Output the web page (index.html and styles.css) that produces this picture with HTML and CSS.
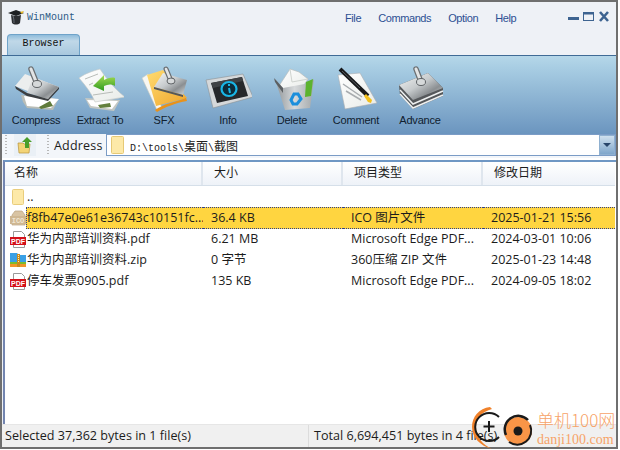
FILE: index.html
```html
<!DOCTYPE html>
<html lang="en">
<head>
<meta charset="utf-8">
<title>WinMount</title>
<link rel="stylesheet" href="styles.css">
</head>
<body>
<div class="win">
  <header class="titlebar">
    <div class="brand">
      <svg class="hat" width="18" height="18" viewBox="0 0 18 18">
        <path d="M1 5 9 2l8 3-8 3z" fill="#1d1f22"/>
        <path d="M4 7c2 1 8 1 10 0l-1 8c-2 2-6 2-8 0z" fill="#2b2d31"/>
        <path d="M6 8c1 3 1 5 1 7" stroke="#6b7078" fill="none"/>
        <path d="M13 4l4-1-2 3z" fill="#e8b923"/>
      </svg>
      <span>WinMount</span>
    </div>
    <nav class="menu">
      <span>File</span><span>Commands</span><span>Option</span><span>Help</span>
    </nav>
    <div class="winbtns">
      <svg width="44" height="12" viewBox="0 0 44 12">
        <rect x="1" y="6" width="11" height="3" fill="#3d6390"/>
        <rect x="16.500" y="1.500" width="10" height="8" fill="none" stroke="#3d6390"/>
        <rect x="16" y="1" width="11" height="2.500" fill="#3d6390"/>
        <path d="M33 1l8 9M41 1l-8 9" stroke="#3d6390" stroke-width="2.600"/>
      </svg>
    </div>
  </header>

  <div class="tabs"><div class="tab">Browser</div></div>

  <div class="toolbar">
    <div class="tool">
      <svg class="ticon" width="48" height="48" viewBox="0 0 48 48">
        <defs>
          <linearGradient id="silver" x1="0" y1="0" x2="1" y2="1">
            <stop offset="0" stop-color="#f6f7f7"/>
            <stop offset=".45" stop-color="#c6cacc"/>
            <stop offset=".7" stop-color="#8b8f92"/>
            <stop offset="1" stop-color="#d8dbdc"/>
          </linearGradient>
          <linearGradient id="bin" x1="0" y1="0" x2="1" y2="0">
            <stop offset="0" stop-color="#8f9497"/>
            <stop offset=".5" stop-color="#d6d9db"/>
            <stop offset="1" stop-color="#a3a8aa"/>
          </linearGradient>
          <linearGradient id="paper" x1="0" y1="0" x2="1" y2="1">
            <stop offset="0" stop-color="#ffffff"/>
            <stop offset="1" stop-color="#e8ebe8"/>
          </linearGradient>
          <linearGradient id="gold" x1="0" y1="0" x2="1" y2="1">
            <stop offset="0" stop-color="#ffdc72"/>
            <stop offset="1" stop-color="#f0a52a"/>
          </linearGradient>
          <linearGradient id="arrow" x1="0" y1="0" x2="0" y2="1">
            <stop offset="0" stop-color="#a5dc52"/>
            <stop offset="1" stop-color="#2e9a1e"/>
          </linearGradient>
        </defs>
        <path d="M9 31 38 33 46 36 41 46 15 44 11 38z" fill="#b9bdb7"/>
        <path d="M12 32 47 35 39 44 15 42z" fill="#fff"/>
        <path d="M27 43 38 37 41 42 29 45z" fill="#5f7a3a"/>
        <path d="M3 22 13 10 47 23 36 35z" fill="#eceeee"/>
        <path d="M21 13 47 23 36 35 15 29z" fill="url(#silver)"/>
        <path d="M3 22 15 29 36 35 47 23 47 25 36 37 15 32 4 25z" fill="#3c3f42"/>
        <path d="M19 5l6 15" stroke="#6b6f72" stroke-width="5.500" stroke-linecap="round"/>
        <path d="M19 5l6 15" stroke="#e2e4e5" stroke-width="3" stroke-linecap="round"/>
        <ellipse cx="25" cy="20" rx="4.500" ry="3.500" fill="#d6d9da" stroke="#5f6366"/>
      </svg>
      <span>Compress</span>
    </div>
    <div class="tool">
      <svg class="ticon" width="48" height="48" viewBox="0 0 48 48">
        <path d="M9 34 44 36 38 47 14 44z" fill="#c4c8c4"/>
        <path d="M11 36 42 37 36 45 15 42z" fill="#fff"/>
        <path d="M22 41 34 39 35 43 24 44z" fill="#64803e"/>
        <path d="M3 14C10 9 17 7 24 5c4 6 13 19 25 28-10 2-20 3-30 5-3-8-9-16-16-24z" fill="url(#paper)" stroke="#c4c8c4" stroke-width=".6"/>
        <path d="M9 15l13-5M13 21l4-2M17 31l20-3" stroke="#b8bcb8" fill="none"/>
        <path d="M17 22 28 11v5c4-2 8-3 11-2l0 8c-3-2-7-2-11 0v5z" fill="url(#arrow)"/>
      </svg>
      <span>Extract To</span>
    </div>
    <div class="tool">
      <svg class="ticon" width="48" height="48" viewBox="0 0 48 48">
        <path d="M2 14 8 10 22 44 17 46z" fill="#f7f7f2" stroke="#c9c9bf" stroke-width=".6"/>
        <path d="M7 11 23 6 47 34 16 42z" fill="url(#gold)"/>
        <path d="M15 46c8-6 20-8 31-12l1 3c-11 2-22 6-30 11z" fill="#e9921a"/>
        <path d="M14 23 23 9 47 16 43 31z" fill="url(#silver)"/>
        <path d="M14 23 43 31 43 33 14 25z" fill="#54575a"/>
        <path d="M26 5l5 12" stroke="#6b6f72" stroke-width="5" stroke-linecap="round"/>
        <path d="M26 5l5 12" stroke="#e2e4e5" stroke-width="2.600" stroke-linecap="round"/>
        <ellipse cx="31" cy="17" rx="4" ry="3" fill="#d6d9da" stroke="#5f6366"/>
      </svg>
      <span>SFX</span>
    </div>
    <div class="tool">
      <svg class="ticon" width="48" height="48" viewBox="0 0 48 48">
        <path d="M2 16 39 10 49 33 9 44z" fill="#d5d8da" stroke="#8c9094" stroke-width=".6"/>
        <path d="M7 19 38 13 44 32 13 39z" fill="#26282b"/>
        <path d="M7 19 38 13 39 17 9 24z" fill="#3f4245"/>
        <ellipse cx="25" cy="25" rx="7.500" ry="7" fill="#0d2c3a" stroke="#19b6e6" stroke-width="2.200"/>
        <path d="M24 21h2M25 24l1 5" stroke="#19b6e6" stroke-width="2"/>
      </svg>
      <span>Info</span>
    </div>
    <div class="tool">
      <svg class="ticon" width="48" height="48" viewBox="0 0 48 48">
        <path d="M11 22 22 5 31 8 40 15 34 24 17 27z" fill="url(#paper)" stroke="#b5b9b5" stroke-width=".6"/>
        <path d="M22 5 24 18 40 15" fill="none" stroke="#cfd3cf"/>
        <path d="M7 15 15 24 42 19 46 15 42 44 17 46z" fill="url(#bin)"/>
        <path d="M6 14 15 24 15 29 7 18z" fill="#5b5f62"/>
        <path d="M38 18 45 15 43 32 37 33z" fill="#5cb32e"/>
        <path d="M23 36 26 30 30 30 33 35 29 40 25 40z" fill="none" stroke="#1c8fdc" stroke-width="3"/>
      </svg>
      <span>Delete</span>
    </div>
    <div class="tool">
      <svg class="ticon" width="48" height="48" viewBox="0 0 48 48">
        <path d="M6 11 28 9 45 39 13 45z" fill="url(#paper)" stroke="#a9adb0" stroke-width=".6"/>
        <path d="M11 20 30 33M14 27l15 9" stroke="#a8acaf" stroke-width="1.500" fill="none"/>
        <path d="M8 5 36 32" stroke="#17181a" stroke-width="4"/>
        <path d="M10 7 28 24" stroke="#565a5e" stroke-width="1"/>
        <path d="M34 30 40 36 39 39 36 38 32 32z" fill="#f2c01e"/>
      </svg>
      <span>Comment</span>
    </div>
    <div class="tool">
      <svg class="ticon" width="48" height="48" viewBox="0 0 48 48">
        <path d="M3 21 4 31 17 45 47 32 47 24 32 9z" fill="#55585b"/>
        <path d="M4 26 17 40 47 27M4 30 17 44 47 31" stroke="#eef0f0" stroke-width="1.500" fill="none"/>
        <path d="M3 21 32 9 47 24 17 36z" fill="url(#silver)"/>
        <path d="M20 5l5 13" stroke="#6b6f72" stroke-width="5.500" stroke-linecap="round"/>
        <path d="M20 5l5 13" stroke="#e2e4e5" stroke-width="3" stroke-linecap="round"/>
        <ellipse cx="25" cy="18" rx="4.500" ry="3.500" fill="#d6d9da" stroke="#5f6366"/>
      </svg>
      <span>Advance</span>
    </div>
  </div>

  <div class="addrbar">
    <div class="grip"></div>
    <div class="gobtn">
      <svg width="16" height="18" viewBox="0 0 16 18">
        <path d="M1 7h5l1 1h6l-1 9H2z" fill="#f3d477" stroke="#b8923a" stroke-width=".7"/>
        <path d="M10 1 15 6h-3v6H8V6H5z" fill="#4a9e2a"/>
      </svg>
    </div>
    <div class="grip"></div>
    <span class="addrlabel">Address</span>
    <div class="addrinput">
      <svg class="afolder" width="13" height="18" viewBox="0 0 13 18">
        <rect x=".5" y=".5" width="12" height="17" rx="1" fill="#fde9a8" stroke="#e6c976"/>
      </svg>
      <span class="path">D:\tools\<span class="pathcjk">桌面</span>\<span class="pathcjk">截图</span></span>
      <div class="combo"><i class="caret"></i></div>
    </div>
  </div>

  <main class="list">
    <div class="cols head">
      <div class="hcell">名称</div>
      <div class="hcell">大小</div>
      <div class="hcell">项目类型</div>
      <div class="hcell last">修改日期</div>
    </div>

    <div class="cols row">
      <div class="namecell">
        <svg class="ficon" width="16" height="18" viewBox="0 0 16 18"><rect x="2.500" y="1.500" width="11" height="15" rx="1" fill="#fde9a8" stroke="#e9cd7c"/></svg>
        <span class="name">..</span>
      </div>
      <div></div><div></div><div></div>
    </div>

    <div class="cols row selected">
      <div class="namecell">
        <svg class="ficon" width="16" height="18" viewBox="0 0 16 18">
          <path d="M2 6 5 2h7l3 4v10H2z" fill="#d9c4a3" stroke="#b9a27e" stroke-width=".7"/>
          <rect y="7" width="16" height="8" fill="#cfb792"/>
          <text class="icotext" x="8" y="14" text-anchor="middle">ICO</text>
        </svg>
        <span class="name">f8fb47e0e61e36743c10151fc...</span>
      </div>
      <div class="cell">36.4 KB</div>
      <div class="cell">ICO 图片文件</div>
      <div class="cell">2025-01-21 15:56</div>
    </div>

    <div class="cols row">
      <div class="namecell">
        <svg class="ficon" width="16" height="18" viewBox="0 0 16 18">
          <path d="M3.500 1.500h8l3 3v13h-11z" fill="#fff" stroke="#9a9a9a"/>
          <rect y="7" width="16" height="8" fill="#d4101a"/>
          <text class="pdftext" x="8" y="13.500" text-anchor="middle">PDF</text>
        </svg>
        <span class="name">华为内部培训资料.pdf</span>
      </div>
      <div class="cell">6.21 MB</div>
      <div class="cell">Microsoft Edge PDF...</div>
      <div class="cell">2024-03-01 10:06</div>
    </div>

    <div class="cols row">
      <div class="namecell">
        <svg class="ficon" width="16" height="18" viewBox="0 0 16 18">
          <path d="M0 2h7l2 2h7v7H0z" fill="#3aa0e6"/>
          <path d="M0 11h16v2H0z" fill="#7dbb2e"/>
          <path d="M0 13h16v3H0z" fill="#f0962a"/>
          <rect x="7" y="3" width="3" height="13" fill="#c98a1e"/>
          <path d="M8.500 4v8" stroke="#fff2b0" stroke-dasharray="1 1"/>
        </svg>
        <span class="name">华为内部培训资料.zip</span>
      </div>
      <div class="cell">0 字节</div>
      <div class="cell">360压缩 ZIP 文件</div>
      <div class="cell">2025-01-23 14:48</div>
    </div>

    <div class="cols row">
      <div class="namecell">
        <svg class="ficon" width="16" height="18" viewBox="0 0 16 18">
          <path d="M3.500 1.500h8l3 3v13h-11z" fill="#fff" stroke="#9a9a9a"/>
          <rect y="7" width="16" height="8" fill="#d4101a"/>
          <text class="pdftext" x="8" y="13.500" text-anchor="middle">PDF</text>
        </svg>
        <span class="name">停车发票0905.pdf</span>
      </div>
      <div class="cell">135 KB</div>
      <div class="cell">Microsoft Edge PDF...</div>
      <div class="cell">2024-09-05 18:02</div>
    </div>
  </main>

  <footer class="status">
    <div class="stat left">Selected 37,362 bytes in 1 file(s)</div>
    <div class="stat">Total 6,694,451 bytes in 4 file(s)</div>
  </footer>

  <div class="mark">
    <svg class="marklogo" width="72" height="44" viewBox="0 0 72 44">
      <path d="M18 2C7 3 0 12 0 22c0 10 8 19 20 22C11 40 4 32 4 22S10 7 20 4z" fill="#f0812a"/>
      <path d="M27 12A14 14 0 1 0 27 32" fill="none" stroke="#1a1a1a" stroke-width="2"/>
      <path d="M17 16v11M11.500 21.500h11" stroke="#1a1a1a" stroke-width="2"/>
      <circle cx="46" cy="26" r="14" fill="#f99547"/>
      <path d="M34 30A13.500 13.500 0 0 1 56 15" fill="none" stroke="#1a1a1a" stroke-width="2.500"/>
      <path d="M58 20A14 14 0 0 1 37 37" fill="none" stroke="#1a1a1a" stroke-width="2"/>
      <circle cx="46" cy="26" r="4.500" fill="#1a1a1a"/>
    </svg>
    <div class="marktext">
      <span class="markcn">单机100网</span>
      <span class="markurl">danji100.com</span>
    </div>
  </div>
</div>
</body>
</html>
```

FILE: styles.css
```css
* { box-sizing: border-box; }
html, body { margin: 0; padding: 0; background: #fff; }
body {
  width: 620px;
  height: 450px;
  overflow: hidden;
  font-family: "Open Sans", "Noto Sans CJK SC", sans-serif;
  font-size: 12px;
  color: #1c1c1c;
}
.win {
  position: relative;
  width: 618px;
  height: 449px;
  border: 2px solid #6f6f6f;
  background: #eef1f6;
  display: flex;
  flex-direction: column;
}
.titlebar {
  height: 32px;
  display: flex;
  align-items: center;
  flex: none;
}
.brand {
  display: flex;
  align-items: center;
  gap: 2px;
  padding: 0 0 2px 5px;
  width: 343px;
  font-family: "Liberation Mono", monospace;
  font-size: 10px;
  color: #2d5a86;
}
.hat { flex: none; }
.menu {
  display: flex;
  gap: 17px;
  flex: 1;
  font-family: "Liberation Sans", sans-serif;
  font-size: 11px;
  letter-spacing: -.4px;
  color: #2c4f93;
}
.winbtns { flex: none; display: flex; padding: 0 5px 2px 0; }
.tabs {
  height: 21px;
  flex: none;
  padding-left: 5px;
  border-bottom: 1px solid #3f6b96;
  box-sizing: content-box;
}
.tab {
  width: 73px;
  height: 21px;
  border: 1px solid #6fa3c9;
  border-bottom: 0;
  border-radius: 4px 4px 0 0;
  background: linear-gradient(#8fbcdb, #c0d8e8 30%, #a8c8de);
  font-family: "Liberation Mono", monospace;
  font-size: 10px;
  color: #111;
  text-align: center;
  line-height: 18px;
}
.toolbar {
  height: 78px;
  flex: none;
  display: flex;
  padding-left: 2px;
  background: linear-gradient(#b5d7e9, #a8cde3 15%, #6b95bf);
}
.tool {
  width: 64px;
  display: flex;
  flex-direction: column;
  align-items: center;
  padding-top: 8px;
  font-family: "Liberation Sans", sans-serif;
  font-size: 11px;
  letter-spacing: -.2px;
  color: #10202e;
  white-space: nowrap;
}
.ticon { flex: none; display: block; }
.tool span { margin-top: 1px; line-height: 14px; }
.addrbar {
  height: 26px;
  flex: none;
  display: flex;
  align-items: center;
  background: #f3f6fa;
  padding: 0 0 2px 3px;
  border-bottom: 2px solid #fff;
}
.grip {
  width: 2px;
  height: 20px;
  flex: none;
  background: repeating-linear-gradient(#b8b8b8 0 1px, transparent 1px 3px);
}
.gobtn {
  width: 22px;
  height: 22px;
  margin: 0 11px 0 7px;
  background: #eaf0f6;
  flex: none;
  display: flex;
  align-items: center;
  justify-content: center;
}
.addrlabel {
  font-size: 12.500px;
  letter-spacing: .2px;
  margin-left: 5px;
  width: 52px;
  flex: none;
}
.addrinput {
  flex: 1;
  height: 22px;
  background: #fff;
  border: 1px solid #7b9cc6;
  display: flex;
  align-items: center;
  padding-left: 4px;
}
.afolder { flex: none; margin-right: 6px; }
.path {
  flex: 1;
  font-family: "Liberation Mono", monospace;
  font-size: 10px;
  color: #222;
}
.pathcjk { font-family: "Noto Sans CJK SC", sans-serif; font-size: 12px; }
.combo {
  width: 16px;
  height: 20px;
  flex: none;
  background: linear-gradient(#cfe0ee, #7fa6cb);
  border: 1px solid #8fb0d0;
  display: flex;
  align-items: center;
  justify-content: center;
}
.caret {
  width: 0;
  height: 0;
  border: 4px solid transparent;
  border-top: 4px solid #28456a;
  border-bottom: 0;
}
.list {
  flex: 1;
  min-height: 0;
  background: #fff;
  margin-left: 1px;
  border-left: 2px solid #7385b0;
  border-top: 2px solid #6f97c4;
  padding-right: 1px;
  font-size: 12.500px;
}
.cols {
  display: grid;
  grid-template-columns: 198px 140px 140px 1fr;
}
.head {
  height: 24px;
  background: linear-gradient(#ffffff, #eef2f8);
  border-bottom: 1px solid #d5dfe9;
  font-size: 12px;
}
.hcell {
  border-right: 2px solid #dfe6ee;
  padding-left: 11px;
  line-height: 22px;
}
.hcell:first-child { padding-left: 9px; }
.hcell.last { border-right: 0; }
.row { height: 21px; line-height: 22px; white-space: nowrap; }
.namecell {
  display: flex;
  align-items: center;
  padding-left: 5px;
  min-width: 0;
}
.ficon { flex: none; }
.name { flex: 1; padding-left: 1px; height: 100%; }
.cell { padding-left: 8px; }
.selected .name,
.selected .cell {
  background: #ffd540;
  border-top: 1px dotted #30408a;
  border-bottom: 1px dotted #30408a;
  line-height: 20px;
}
.selected .name { border-left: 1px dotted #30408a; padding-left: 0; }
.icotext {
  font-family: "Liberation Mono", monospace;
  font-size: 7px;
  font-weight: 700;
  fill: #f1e6d2;
}
.pdftext {
  font-family: "Liberation Sans", sans-serif;
  font-size: 7px;
  font-weight: 700;
  fill: #fff;
}
.status {
  height: 23px;
  flex: none;
  display: grid;
  grid-template-columns: 307px 1fr;
  background: #f0f0f0;
  border-top: 1px solid #e6e6e6;
  font-size: 12.600px;
  line-height: 22px;
}
.stat { padding-left: 5px; }
.stat.left { padding-left: 3px; border-right: 1px solid #dcdcdc; }
.mark {
  position: absolute;
  right: -2px;
  bottom: -2px;
  width: 146px;
  height: 44px;
  display: flex;
  pointer-events: none;
}
.marklogo { flex: none; }
.marktext {
  display: flex;
  flex-direction: column;
  margin-left: -7px;
  padding-top: 4px;
  color: #f7a368;
  white-space: nowrap;
}
.markcn {
  font-family: "Noto Sans CJK SC", sans-serif;
  font-size: 17px;
  line-height: 21px;
  font-weight: 300;
}
.markurl {
  font-family: "Liberation Serif", serif;
  font-size: 14px;
  line-height: 17px;
  margin-top: 1px;
}
```
